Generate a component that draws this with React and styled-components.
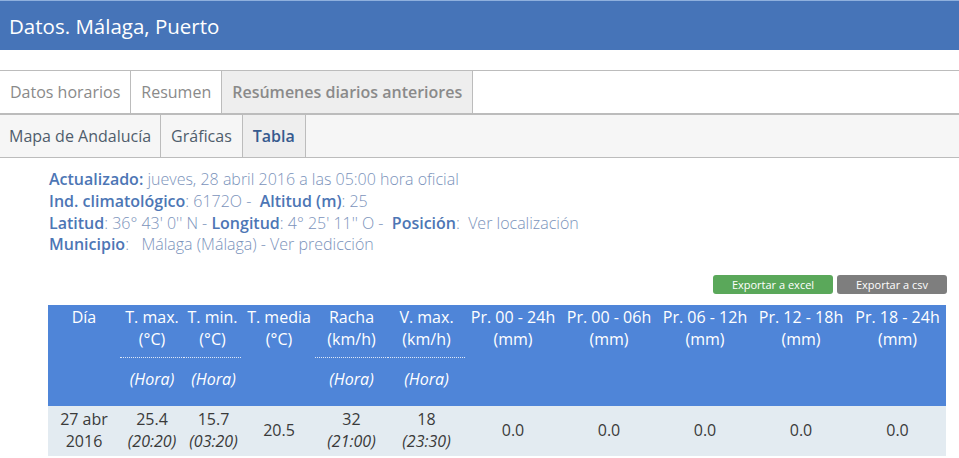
import styled, { createGlobalStyle } from "styled-components";

const Global = createGlobalStyle`
  body {
    margin: 0;
    background: #fff;
    font-family: "Open Sans", "Liberation Sans", sans-serif;
  }
`;

const TopBar = styled.div`
  height: 49px;
  background: #4674b8;
  border-top: 1px solid #8fb0dd;
  display: flex;
  align-items: center;
  padding-left: 9px;
  color: #fff;
  font-size: 20.5px;
`;

const TabRow = styled.div`
  display: flex;
  height: ${props => props.h}px;
  margin-top: ${props => props.top || 0}px;
  background: ${props => props.bg};
  border-top: ${props => props.top ? "1px solid #bcbcbc" : "none"};
  border-bottom: ${props => props.bottom}px solid #bcbcbc;
`;

const Tab = styled.div`
  display: flex;
  align-items: center;
  padding: 0 ${props => props.pad || 9}px;
  font-size: 16px;
  border-right: 1px solid #bcbcbc;
  color: ${props => props.color};
  font-weight: ${props => props.active ? 600 : 400};
  background: ${props => props.active ? "#eeeeee" : "transparent"};
`;

const Info = styled.div`
  padding: 11px 0 0 49px;
  font-size: 16px;
  line-height: 21.8px;
  color: #7b93bb;
  font-weight: 300;
`;

const Label = styled.b`
  color: #4d76b5;
  font-weight: 600;
`;

const Link = styled.span`
  color: #7b93bb;
`;

const Buttons = styled.div`
  display: flex;
  justify-content: flex-end;
  gap: 4px;
  padding: 19px 12px 0 0;
`;

const Button = styled.div`
  width: ${props => props.w}px;
  height: 19px;
  border-radius: 3px;
  background: ${props => props.bg};
  color: #fff;
  font-size: 11px;
  display: flex;
  align-items: center;
  justify-content: center;
`;

const Table = styled.table`
  margin: 11px 0 0 48px;
  width: 898px;
  border-collapse: collapse;
  table-layout: fixed;
  font-size: 16px;
`;

const Th = styled.th`
  background: #4f85d8;
  color: #fff;
  font-weight: 400;
  line-height: 22px;
  vertical-align: top;
  padding: ${props => props.sub ? "10px 0 16px" : "1px 0 0"};
  font-style: ${props => props.sub ? "italic" : "normal"};
  height: ${props => props.sub ? "22px" : "51px"};
`;

const DotLine = styled.div`
  border-bottom: 1px dotted #dfe8f7;
  padding-bottom: 7px;
  margin-right: ${props => props.mr || 0}px;
`;

const Td = styled.td`
  background: #e3ebf1;
  color: #3a3a3a;
  text-align: center;
  line-height: 22px;
  padding: 2px 0 4px;
  font-weight: 400;
`;

const Hour = styled.i`
  display: block;
  font-style: italic;
`;

const cols = [72, 64, 59, 72, 73, 77, 96, 96, 96, 96, 97];

export default function App() {
  const pr = ["Pr. 00 - 24h", "Pr. 00 - 06h", "Pr. 06 - 12h", "Pr. 12 - 18h", "Pr. 18 - 24h"];
  return (
    <>
      <Global />
      <TopBar>Datos. Málaga, Puerto</TopBar>
      <TabRow h={42} top={20} bottom={2} bg="#fff">
        <Tab color="#8a8a8a" pad={10}>Datos horarios</Tab>
        <Tab color="#8a8a8a" pad={10}>Resumen</Tab>
        <Tab color="#8a8a8a" pad={10} active>Resúmenes diarios anteriores</Tab>
      </TabRow>
      <TabRow h={42} bottom={1} bg="#f6f6f6">
        <Tab color="#4f5d6c">Mapa de Andalucía</Tab>
        <Tab color="#4f5d6c" pad={10}>Gráficas</Tab>
        <Tab color="#365a8e" active pad={10}>Tabla</Tab>
      </TabRow>
      <Info>
        <div><Label>Actualizado:</Label> jueves, 28 abril 2016 a las 05:00 hora oficial</div>
        <div><Label>Ind. climatológico</Label>: 6172O - &nbsp;<Label>Altitud (m)</Label>: 25</div>
        <div><Label>Latitud</Label>: 36° 43' 0'' N - <Label>Longitud</Label>: 4° 25' 11'' O - &nbsp;<Label>Posición</Label>: &nbsp;<Link>Ver localización</Link></div>
        <div><Label>Municipio</Label>: &nbsp; Málaga (Málaga) - <Link>Ver predicción</Link></div>
      </Info>
      <Buttons>
        <Button w={120} bg="#5aa85a">Exportar a excel</Button>
        <Button w={110} bg="#7e7e7e">Exportar a csv</Button>
      </Buttons>
      <Table>
        <colgroup>
          {cols.map((w, i) => <col key={i} style={{ width: w }} />)}
        </colgroup>
        <thead>
          <tr>
            <Th rowSpan={2}>Día</Th>
            <Th><DotLine>T. max.<br />(°C)</DotLine></Th>
            <Th><DotLine mr={2}>T. min.<br />(°C)</DotLine></Th>
            <Th rowSpan={2}>T. media<br />(°C)</Th>
            <Th><DotLine>Racha<br />(km/h)</DotLine></Th>
            <Th><DotLine>V. max.<br />(km/h)</DotLine></Th>
            {pr.map(p => <Th key={p} rowSpan={2}>{p}<br />(mm)</Th>)}
          </tr>
          <tr>
            <Th sub>(Hora)</Th>
            <Th sub>(Hora)</Th>
            <Th sub>(Hora)</Th>
            <Th sub>(Hora)</Th>
          </tr>
        </thead>
        <tbody>
          <tr>
            <Td>27 abr<br />2016</Td>
            <Td>25.4<Hour>(20:20)</Hour></Td>
            <Td>15.7<Hour>(03:20)</Hour></Td>
            <Td>20.5</Td>
            <Td>32<Hour>(21:00)</Hour></Td>
            <Td>18<Hour>(23:30)</Hour></Td>
            {pr.map(p => <Td key={p}>0.0</Td>)}
          </tr>
        </tbody>
      </Table>
    </>
  );
}
